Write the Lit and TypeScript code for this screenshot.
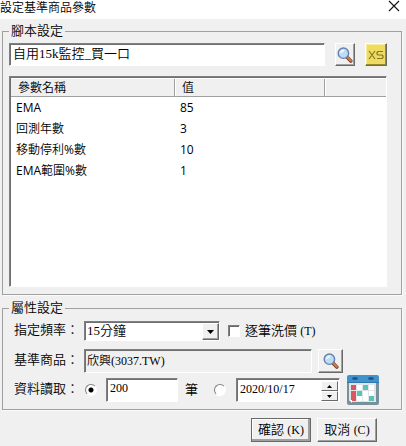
import { LitElement, html, css, svg } from "lit";
import { customElement, state } from "lit/decorators.js";

interface Param {
  name: string;
  value: string;
}

const magnifier = html`<svg class="glyph" viewBox="0 0 16 16" aria-hidden="true">
  <path d="M10.4 10.6 13.8 14" stroke="#7a4026" stroke-width="3.6" stroke-linecap="round" />
  <path d="M10.8 10.6 13.8 13.6" stroke="#c87a4c" stroke-width="2.2" stroke-linecap="round" />
  <circle cx="6.4" cy="6.2" r="5.2" fill="#bcdcf6" stroke="#6480b0" stroke-width="1.4" />
  <path d="M3 6.4A3.6 3.6 0 0 1 7.6 2.8Q7 5.6 3 6.4Z" fill="#f2faff" />
</svg>`;

const cells: [number, number, string][] = [
  [4, 11, "#dc5560"], [10, 11, "#fff"], [16, 11, "#58c4b4"], [22, 11, "#fff"],
  [4, 17, "#dc5560"], [10, 17, "#58c4b4"], [16, 17, "#fff"], [22, 17, "#fff"],
  [4, 22, "#dc5560"], [10, 22, "#fff"], [16, 22, "#fff"], [22, 22, "#58c4b4"],
];

const calendar = html`<svg class="calendar-art" viewBox="0 0 32 32" aria-hidden="true">
  <path d="M0 8H32V29Q32 31 30 31H2Q0 31 0 29Z" fill="#78909a" />
  <path d="M2 8H29V28H5L2 26Z" fill="#dfe6ea" />
  <path d="M2 1H30Q32 1 32 3V9H0V3Q0 1 2 1Z" fill="#3f92cc" />
  <path d="M0 8H32V9H0Z" fill="#2e76ac" />
  <path d="M6.5 4.5H9.5M22.5 4.5H25.5" stroke="#1d4f86" stroke-width="2.4" stroke-linecap="round" />
  ${cells.map(([x, y, c]) => svg`<rect x=${x} y=${y} width="5" height="5" fill=${c} />`)}
  <path d="M2 26 5 29V26Z" fill="#fff" />
</svg>`;

/** Gives the Latin runs of a mixed-script string the regular weight. */
const mixed = (text: string) =>
  text
    .split(/([\x20-\x7e]+)/)
    .filter((run) => run)
    .map((run) => (/^[\x20-\x7e]/.test(run) ? html`<span class="roman">${run}</span>` : run));

@customElement("app-root")
export class AppRoot extends LitElement {
  @state() private params: Param[] = [
    { name: "EMA", value: "85" },
    { name: "回測年數", value: "3" },
    { name: "移動停利%數", value: "10" },
    { name: "EMA範圍%數", value: "1" },
  ];

  static styles = css`
    :host {
      display: block;
      min-height: 100vh;
      background: #f0f0f0;
      color: #000;
      font: 350 13px/18px "Liberation Serif", "Noto Sans CJK TC", serif;
    }
    * { box-sizing: border-box; }
    input, select, button { font: inherit; color: inherit; margin: 0; border-radius: 0; outline: 0; }
    .latin { font-size: 12px; }
    .roman { font-weight: 400; }

    .titlebar {
      display: flex;
      justify-content: space-between;
      height: 19px;
      padding-right: 6px;
      background: #fff;
    }
    h1 {
      margin: 0;
      font: 350 12px/14px "Noto Sans CJK TC", sans-serif;
    }
    .close { width: 12px; height: 12px; padding: 0; border: 0; background: none; }
    .close svg { display: block; width: 12px; height: 12px; }

    form { padding: 3px 4px 4px 2px; }
    fieldset {
      margin: 0 0 4px;
      min-width: 0;
      border: 1px solid #a0a0a0;
      box-shadow: 1px 1px 0 #fcfcfc;
      padding: 3px 14px 7px 6px;
    }
    fieldset.props { padding: 2px 14px 3px 11px; margin-bottom: 8px; }
    legend { padding: 0 2px; height: 18px; }
    .props legend { margin-left: -5px; }

    .row { display: flex; align-items: center; }
    .row.freq { height: 24px; }
    .row.symbol { height: 24px; margin-top: 6px; }
    .row.range { height: 32px; margin-top: 1px; }
    .caption { flex: 0 0 70px; padding-bottom: 2px; }
    .script-row { gap: 10px; margin-bottom: 10px; }

    .field {
      min-width: 0;
      height: 24px;
      border: 1px solid;
      border-color: #808080 #fff #fff #808080;
      box-shadow: inset 1px 1px 0 #707070;
      background: #fff;
      padding: 0 3px 4px;
    }
    .script { flex: 1; height: 23px; }
    .readonly { width: 228px; background: #f0f0f0; padding: 0 2px 2px; font-size: 12px; }
    .count { width: 72px; margin-left: 9px; font-size: 12px; }

    .tool, .push {
      display: grid;
      place-items: center;
      padding: 0;
      background: #f0f0f0;
      border: 1px solid;
      border-color: #fff #696969 #696969 #fff;
      box-shadow: inset -1px -1px 0 #a0a0a0;
    }
    .tool { flex: none; width: 20px; height: 23px; }
    .tool.wide { width: 25px; height: 24px; margin-left: 6px; }
    .tool.xs { width: 22px; background: #eedb60; box-shadow: inset -1px -1px 0 #9a8a2c, inset 1px 1px 0 #f6eb9c; }
    .glyph { width: 16px; height: 16px; fill: none; }
    .xs svg { width: 16px; height: 12px; }
    .push { width: 60px; height: 24px; white-space: pre; }
    .push.default { outline: 1px solid #696969; outline-offset: -1px; box-shadow: inset -2px -2px 0 #a0a0a0, inset 1px 1px 0 #fff; }

    .list {
      height: 211px;
      border: 1px solid;
      border-color: #808080 #fff #fff #808080;
      box-shadow: inset 1px 1px 0 #707070;
      background: #fff;
      padding: 2px 0 0 1px;
    }
    table {
      width: 100%;
      table-layout: fixed;
      border-collapse: separate;
      border-spacing: 0;
      font: 350 12px/18px "Open Sans", "Noto Sans CJK TC", sans-serif;
    }
    th {
      height: 18px;
      padding: 0 7px;
      background: #f0f0f0;
      border-bottom: 1px solid #a0a0a0;
      border-right: 1px solid #a0a0a0;
      font-weight: 350;
      line-height: 16px;
      text-align: left;
    }
    th:last-child { border-right: 0; }
    th + th { box-shadow: inset 1px 0 0 #fff; }
    td { height: 21px; padding: 0 5px; }
    .name { width: 164px; }
    .value { width: 150px; }

    .combo { position: relative; width: 136px; height: 20px; }
    .combo select {
      appearance: none;
      display: block;
      width: 100%;
      height: 20px;
      padding: 0 18px 0 2px;
      line-height: 18px;
    }
    .combo .drop {
      position: absolute;
      top: 2px;
      right: 1px;
      width: 17px;
      height: 17px;
      pointer-events: none;
    }
    .drop svg, .spin svg { display: block; fill: #000; }
    .drop svg { width: 7px; height: 4px; }

    input[type="checkbox"], input[type="radio"] {
      appearance: none;
      flex: none;
      width: 12px;
      height: 12px;
      background: #fff;
      border: 1px solid;
      border-color: #808080 #fff #fff #808080;
      box-shadow: inset 1px 1px 0 #696969;
    }
    input[type="checkbox"] { margin: 0 5px 0 8px; }
    input[type="checkbox"]:checked { background: #404040; }
    input[type="radio"] { border-radius: 50%; margin-left: 1px; box-shadow: none; }
    input[type="radio"]:checked { background: radial-gradient(circle, #000 2px, #fff 3px); }
    .unit { margin: 0 15px 0 7px; }

    .date { display: flex; width: 104px; margin: 0 7px 0 10px; padding: 1px 1px 0 0; }
    .date input { flex: 1; min-width: 0; height: 18px; padding: 0 0 0 3px; border: 0; background: none; font-size: 12px; }
    .spin { display: flex; flex-direction: column; width: 17px; height: 20px; margin-top: 1px; }
    .spin button { flex: 1; width: 17px; height: 10px; min-height: 0; box-shadow: none; }
    .spin svg { width: 5px; height: 3px; }
    .calendar { flex: none; width: 32px; height: 32px; padding: 0; border: 0; background: none; }
    .calendar-art { display: block; width: 32px; height: 32px; }

    .actions { display: flex; justify-content: flex-end; gap: 6px; padding-right: 25px; }
  `;

  render() {
    return html`
      <header class="titlebar">
        <h1>設定基準商品參數</h1>
        <button class="close" aria-label="關閉">
          <svg viewBox="0 0 12 12"><path d="M1 1 11 11M11 1 1 11" stroke="#111" stroke-width="1.1" /></svg>
        </button>
      </header>
      <form @submit=${(e: Event) => e.preventDefault()}>
        <fieldset>
          <legend>腳本設定</legend>
          <div class="row script-row">
            <input class="field script" aria-label="腳本設定" value="自用15k監控_買一口" />
            <button type="button" class="tool" aria-label="搜尋腳本">${magnifier}</button>
            <button type="button" class="tool xs" aria-label="XS">
              <svg viewBox="0 0 16 12" fill="none" stroke="#84742c" stroke-width="1.2" aria-hidden="true">
                <path d="M1 2 7 10M7 2 1 10M15 2.5H10L9 3.5V5L10 6H14L15 7V8.5L14 9.5H9" />
              </svg>
            </button>
          </div>
          <div class="list">
            <table>
              <thead>
                <tr>
                  <th class="name" scope="col">參數名稱</th>
                  <th class="value" scope="col">值</th>
                  <th></th>
                </tr>
              </thead>
              <tbody>
                ${this.params.map((p) => html`<tr><td>${mixed(p.name)}</td><td>${mixed(p.value)}</td><td></td></tr>`)}
              </tbody>
            </table>
          </div>
        </fieldset>

        <fieldset class="props">
          <legend>屬性設定</legend>
          <div class="row freq">
            <label class="caption" for="freq">指定頻率：</label>
            <div class="combo">
              <select id="freq" class="field"><option>15分鐘</option></select>
              <span class="drop push"><svg viewBox="0 0 7 4"><path d="M0 0H7L3.5 4Z" /></svg></span>
            </div>
            <input id="tick" type="checkbox" />
            <label for="tick">逐筆洗價 <span class="latin">(T)</span></label>
          </div>
          <div class="row symbol">
            <label class="caption" for="symbol">基準商品：</label>
            <input id="symbol" class="field readonly" readonly value="欣興(3037.TW)" />
            <button type="button" class="tool wide" aria-label="搜尋商品">${magnifier}</button>
          </div>
          <div class="row range">
            <span class="caption">資料讀取：</span>
            <input type="radio" name="range" aria-label="筆數" checked />
            <input id="count" class="field count" value="200" />
            <label class="unit" for="count">筆</label>
            <input type="radio" name="range" aria-label="日期" />
            <div class="field date">
              <input aria-label="起始日期" value="2020/10/17" />
              <div class="spin">
                <button type="button" class="push" aria-label="增加"><svg viewBox="0 0 5 3"><path d="M0 3H5L2.5 0Z" /></svg></button>
                <button type="button" class="push" aria-label="減少"><svg viewBox="0 0 5 3"><path d="M0 0H5L2.5 3Z" /></svg></button>
              </div>
            </div>
            <button type="button" class="calendar" aria-label="選擇日期">${calendar}</button>
          </div>
        </fieldset>

        <div class="actions">
          <button class="push default"><span>確認 <span class="latin">(K)</span></span></button>
          <button type="button" class="push"><span>取消 <span class="latin">(C)</span></span></button>
        </div>
      </form>
    `;
  }
}
